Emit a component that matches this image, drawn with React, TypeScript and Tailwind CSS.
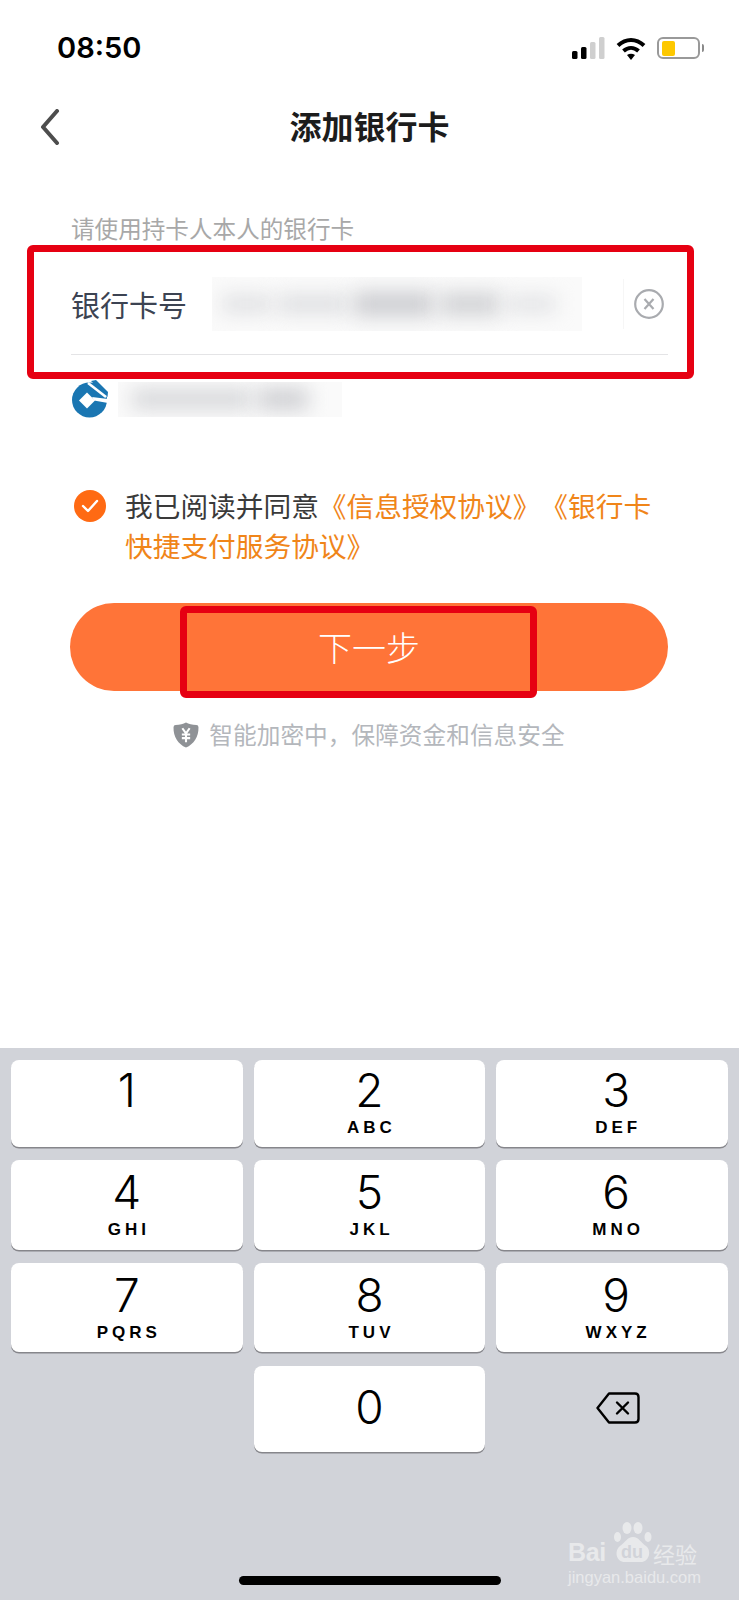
const cjk = "font-['Noto_Sans_CJK_SC','Noto_Sans',sans-serif]";
const rows = [
  [["1", ""], ["2", "ABC"], ["3", "DEF"]],
  [["4", "GHI"], ["5", "JKL"], ["6", "MNO"]],
  [["7", "PQRS"], ["8", "TUV"], ["9", "WXYZ"]],
];
const rowClass = ["h-[87px] mb-[13px]", "h-[90px] mb-[13px]", "h-[89px] mb-[14px]"];

function Key({ n, l, shift, lower }: { n: string; l: string; shift: boolean; lower: boolean }) {
  return (
    <div className={`w-[232px] h-full bg-white rounded-[8px] shadow-[0_1.5px_0_#86868b] flex flex-col items-center text-black ${shift ? "pl-[8px]" : ""} ${lower ? "pt-[2px]" : ""}`}>
      <div className="font-['Inter',sans-serif] text-[46px] leading-[46px] mt-[7px] font-light">{n}</div>
      <div className="font-['Liberation_Sans',sans-serif] text-[17px] leading-[20px] mt-[5px] font-bold tracking-[4px] pl-[4px]">{l}</div>
    </div>
  );
}

function Blur({ w, h, className, bars }: { w: string; h: string; className?: string; bars: [string, string][] }) {
  return (
    <div className={`${w} ${h} ${className ?? ""} bg-[#fafafa] overflow-hidden flex items-center`}>
      {bars.map(([cls, key]) => <div key={key} className={`${cls} blur-[10px]`} />)}
    </div>
  );
}

export default function App() {
  return (
    <div className="relative w-[739px] h-[1600px] bg-white overflow-hidden flex flex-col">
      <div className="h-[96px] shrink-0 flex items-center justify-between pl-[57px] pr-[35px]">
        <span className="text-[29px] font-semibold text-black font-['Inter',sans-serif]">08:50</span>
        <div className="flex items-center gap-[11px]">
          <svg width="33" height="22" viewBox="0 0 33 22">
            <rect x="0" y="14" width="5.500" height="8" rx="1.500" fill="#000" />
            <rect x="9" y="10" width="5.500" height="12" rx="1.500" fill="#000" />
            <rect x="18" y="5" width="5.500" height="17" rx="1.500" fill="#cfcfcf" />
            <rect x="27" y="0" width="5.500" height="22" rx="1.500" fill="#cfcfcf" />
          </svg>
          <svg width="30" height="23" viewBox="0 0 30 23" fill="none" stroke="#000" strokeWidth="4">
            <path d="M2 8.500 C10 1 20 1 28 8.500" />
            <path d="M7.500 14 C12 10 18 10 22.500 14" />
            <path d="M11 18 Q15 15.500 19 18 L15 23 Z" fill="#000" stroke="none" />
          </svg>
          <div className="flex items-center">
            <div className="w-[43px] h-[22px] border-2 border-[#999999] rounded-[6px] pl-[3px] py-[1.5px]">
              <div className="w-[13px] h-full bg-[#fdc800] rounded-[2px]" />
            </div>
            <div className="w-[2px] h-[8px] bg-[#8a8a8a] rounded-r-[2px] ml-[2px]" />
          </div>
        </div>
      </div>

      <div className={`h-[62px] shrink-0 relative flex items-center justify-center pb-[4px] ${cjk}`}>
        <svg className="absolute left-[40px] top-[13px]" width="20" height="36" viewBox="0 0 20 36" fill="none" stroke="#4d4d4d" strokeWidth="4" strokeLinecap="round" strokeLinejoin="round">
          <path d="M17 2 L3 18 L17 34" />
        </svg>
        <span className="text-[32px] font-bold text-[#1c1c1c] leading-none">添加银行卡</span>
      </div>

      <div className={`pl-[71px] pr-[71px] pt-[51px] ${cjk}`}>
        <div className="text-[23.6px] leading-[38px] text-[#a8a8a8]">请使用持卡人本人的银行卡</div>
        <div className="h-[107px] flex items-center pt-[7px]">
          <span className="text-[29px] text-[#3c4352] w-[141px] shrink-0 leading-none">银行卡号</span>
          <Blur w="w-[370px]" h="h-[54px]" className="gap-[6px] pl-[10px]" bars={[
            ["w-[50px] h-[14px] bg-[#d9dadd] shrink-0", "a"],
            ["w-[70px] h-[16px] bg-[#d9dadd] shrink-0", "b"],
            ["w-[80px] h-[24px] bg-[#cbccd0] shrink-0", "c"],
            ["w-[60px] h-[22px] bg-[#cfd0d3] shrink-0", "d"],
            ["w-[50px] h-[14px] bg-[#dddee1] shrink-0", "e"],
          ]} />
          <div className="w-px h-[50px] bg-[#f6f6f6] ml-[41px] shrink-0" />
          <svg className="ml-[10px] shrink-0" width="30" height="30" viewBox="0 0 30 30" fill="none" stroke="#a9abaf" strokeWidth="2.200">
            <circle cx="15" cy="15" r="13.800" />
            <path d="M10.500 10 L19.500 20 M19.500 10 L10.500 20" />
          </svg>
        </div>
        <div className="h-px bg-[#e4e4e6]" />
        <div className="flex items-center h-[88px]">
          <svg width="36" height="38" viewBox="0 0 36 38" className="shrink-0 ml-[1px]">
            <circle cx="17.500" cy="20" r="17.500" fill="#1a76b2" />
            <path d="M19 1 L24 0 L36 12 L35.500 17 Z" fill="#1a76b2" />
            <path d="M16 3 L34 17" fill="none" stroke="#fff" strokeWidth="2.500" />
            <path d="M15 12.500 L23 20.500 L15 28.500 L7 20.500 Z" fill="#fff" />
            <path d="M20 17 L36 19 L36 23 L22 20.500 Z" fill="#fff" />
          </svg>
          <Blur w="w-[224px]" h="h-[35px]" className="ml-[10px] gap-[6px] pl-[14px]" bars={[
            ["w-[120px] h-[18px] bg-[#d3d4d7] shrink-0", "a"],
            ["w-[50px] h-[20px] bg-[#cbccd0] shrink-0", "b"],
          ]} />
        </div>
        <div className="flex mt-[42px]">
          <svg width="32" height="32" viewBox="0 0 32 32" className="shrink-0 mt-[5px] ml-[3px]">
            <circle cx="16" cy="16" r="16" fill="#ff6a13" />
            <path d="M9 16 L14 21 L23 11" fill="none" stroke="#fff" strokeWidth="2.400" strokeLinecap="round" strokeLinejoin="round" />
          </svg>
          <p className="ml-[19px] w-[540px] text-[27.7px] leading-[40px] text-[#3a3a3a] [text-spacing-trim:space-all]">
            我已阅读并同意<span className="text-[#f08519]">《信息授权协议》《银行卡快捷支付服务协议》</span>
          </p>
        </div>
        <div className="mt-[38px] h-[88px] w-[598px] ml-[-1px] rounded-[44px] bg-[#ff7438] flex items-center justify-center text-white text-[34px] font-light leading-none">
          下一步
        </div>
        <div className="mt-[31px] flex items-center justify-center gap-[10px] w-[596px]">
          <svg width="26" height="26" viewBox="0 0 25 25">
            <path d="M12.500 0.500 C15 2 18.500 2.800 22.500 2.800 Q24.500 2.800 24.500 5 C24.800 14 20 21.500 12.500 24.500 C5 21.500 0.200 14 0.500 5 Q0.500 2.800 2.500 2.800 C6.500 2.800 10 2 12.500 0.500 Z" fill="#8f9296" />
            <path d="M9 6 L12.500 11 L16 6 M8.500 12 H16.500 M8.500 15.500 H16.500 M12.500 11 V19.500" fill="none" stroke="#fff" strokeWidth="2" />
          </svg>
          <span className="text-[23.7px] leading-none text-[#b4b7bc]">智能加密中，保障资金和信息安全</span>
        </div>
      </div>

      <div className="absolute left-0 right-0 top-[1048px] bottom-0 bg-[#d1d3d9] pt-[12px] px-[11px]">
        {rows.map((row, i) => (
          <div key={i} className={`flex gap-[11px] ${rowClass[i]}`}>
            {row.map(([n, l], j) => <Key key={n} n={n} l={l} shift={j === 2} lower={i > 0} />)}
          </div>
        ))}
        <div className="flex gap-[11px] h-[86px]">
          <div className="w-[232px]" />
          <div className="w-[232px] bg-white rounded-[8px] shadow-[0_1.5px_0_#86868b] flex items-center justify-center pb-[4px] font-['Inter',sans-serif] text-[46px] font-light text-black">0</div>
          <div className="w-[232px] flex items-center justify-center pl-[12px] pb-[3px]">
            <svg width="44" height="32" viewBox="0 0 44 32" fill="none" stroke="#000" strokeWidth="2.400" strokeLinejoin="round" strokeLinecap="round">
              <path d="M13 1.500 H39 Q42.500 1.500 42.500 5 V27 Q42.500 30.500 39 30.500 H13 L1.500 16 Z" />
              <path d="M21 10.500 L32 21.500 M32 10.500 L21 21.500" />
            </svg>
          </div>
        </div>
      </div>

      <div className="absolute left-[239px] top-[1576px] w-[262px] h-[9px] rounded-full bg-black" />

      <div className="absolute left-[27px] top-[245px] w-[667px] h-[134px] border-[7px] border-[#e60012] rounded-[6px]" />
      <div className="absolute left-[180px] top-[606px] w-[357px] h-[92px] border-[7px] border-[#e60012] rounded-[6px]" />

      <div className="absolute left-[568px] top-[1522px] w-[135px] h-[62px] text-[#e8e9eb] font-['Liberation_Sans',sans-serif]">
        <span className="absolute left-0 top-[17px] text-[25px] leading-[26px] font-bold tracking-[-0.3px]">Bai</span>
        <svg className="absolute left-[46px] top-0" width="38" height="41" viewBox="0 0 38 41" fill="#e8e9eb">
          <ellipse cx="13" cy="6" rx="4.500" ry="6" />
          <ellipse cx="24" cy="6" rx="4.500" ry="6" />
          <ellipse cx="3.500" cy="15" rx="3.500" ry="5" />
          <ellipse cx="34" cy="15" rx="3.500" ry="5" />
          <path d="M19 15 C25 15 27 21 32 24 C38 29 35 40 27 40 L11 40 C2 40 0 29 6 24 C11 21 13 15 19 15 Z" />
        </svg>
        <span className="absolute left-[53px] top-[21px] text-[18px] leading-[18px] font-bold text-[#d1d3d9]">du</span>
        <span className={`absolute left-[85px] top-[20px] text-[22px] leading-[22px] ${cjk}`}>经验</span>
        <span className="absolute left-0 top-[47px] text-[16.5px] leading-[16px] whitespace-nowrap">jingyan.baidu.com</span>
      </div>
    </div>
  );
}
